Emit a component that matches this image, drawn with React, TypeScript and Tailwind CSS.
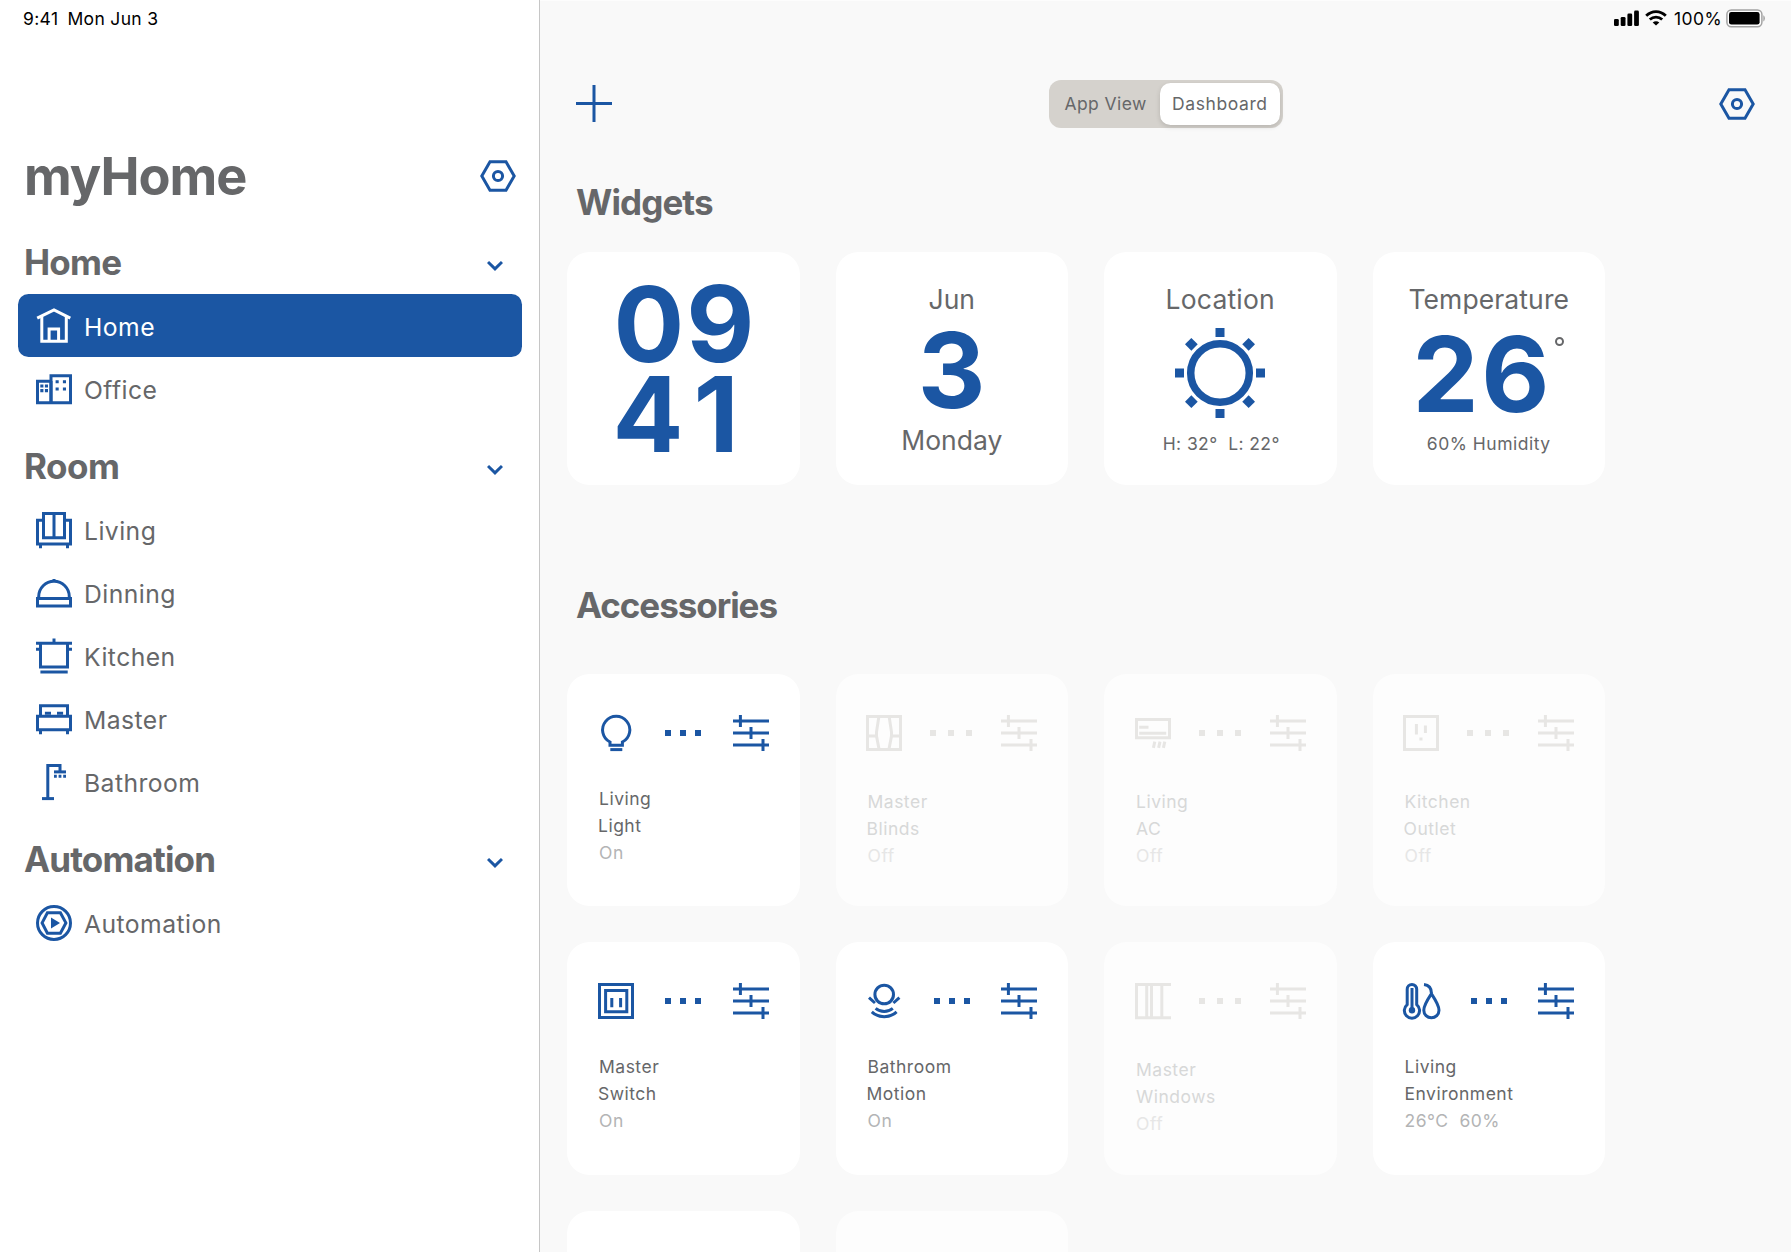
import React, { ReactNode } from "react";

function Glyph({ children, className = "" }: { children: ReactNode; className?: string }) {
  return (
    <svg
      width="36"
      height="36"
      viewBox="0 0 36 36"
      fill="none"
      stroke="currentColor"
      strokeWidth="3"
      className={"shrink-0 overflow-visible " + className}
    >
      {children}
    </svg>
  );
}

/* Navigation icons */
const HomeIcon = () => (
  <Glyph>
    <path d="M1.2 10.2 L18 1.9 L34.3 10.2" />
    <path d="M5.8 8.5 V33.3 H30.3 V8.5" />
    <path d="M13.1 33 V21 H22.6 V33" />
  </Glyph>
);
const OfficeIcon = () => (
  <Glyph>
    <path d="M15 10.3 H1.5 V31.7" />
    <path d="M15 31.7 V4.7 H34.5 V31.7 H0" />
    <path d="M15 31 V10" />
    <path
      stroke="none"
      fill="currentColor"
      d="M4.3 13.5h3.1v3.1H4.3z M8.9 13.5H12v3.1H8.9z M4.3 18.1h3.1v3.1H4.3z M8.9 18.1H12v3.1H8.9z M19.6 9.2h3.1v3.1h-3.1z M26.9 9.2H30v3.1h-3.1z M19.6 16.4h3.1v3.1h-3.1z M26.9 16.4H30v3.1h-3.1z"
    />
  </Glyph>
);
const LivingIcon = () => (
  <Glyph>
    <path d="M7.5 1.5 H28.5 V25.8 H7.5 Z M18 1.5 V25.8" />
    <path d="M7.5 8.2 H1.5 V32 H34.5 V8.2 H28.5" />
    <path d="M4.5 32 V36.2 M31.5 32 V36.2" />
  </Glyph>
);
const DiningIcon = () => (
  <Glyph>
    <path d="M1.5 23.6 H34.5 V31 H1.5 Z" />
    <path d="M2.7 23 V21.6 A15.3 15.3 0 0 1 33.3 21.6 V23" />
    <path d="M18 4 V7" />
  </Glyph>
);
const KitchenIcon = () => (
  <Glyph>
    <path d="M0 5.3 H36" />
    <path d="M18 .5 V5" />
    <path d="M4.5 5 V29 H31.5 V5" />
    <path d="M0 11.3 H4.5 M31.5 11.3 H36" />
    <path d="M4.4 34 H31.7" />
  </Glyph>
);
const BedIcon = () => (
  <Glyph>
    <path d="M4.5 15 V4.7 H31.5 V15" />
    <path d="M1.5 15.3 H34.5 V28.7 H1.5 Z" />
    <path d="M4.5 29 V33.3 M31.5 29 V33.3" />
    <path d="M8.9 12.2 H15 M21 12.2 H27.1" />
  </Glyph>
);
const ShowerIcon = () => (
  <Glyph>
    <path d="M6 34.6 H18" />
    <path d="M11.8 34.6 V1.6 H24 V7.5" />
    <path d="M18 7.9 H30" />
    <path d="M18 12.2 h2.8 M22.6 12.2 h2.8 M27.2 12.2 H30" />
  </Glyph>
);
const AutomationIcon = () => (
  <Glyph>
    <circle cx="18" cy="18" r="16.5" />
    <path d="M11.4 7.7 H24.4 L29.9 17.9 L24.4 28.2 H11.4 L6.1 17.9 Z" />
    <path stroke="none" fill="currentColor" d="M15 12.6 L24 18 L15 23.6 Z" />
  </Glyph>
);
const GearIcon = () => (
  <Glyph className="text-[#1b56a3]">
    <path d="M10 3.7 H26 L34.2 18 L26 32.3 H10 L1.8 18 Z" />
    <circle cx="18" cy="18" r="4.6" />
  </Glyph>
);

/* Accessory icons */
const BulbIcon = () => (
  <Glyph>
    <path d="M12 30.3 V27 A13.6 13.6 0 1 1 24.4 27 V30.3 Z" />
    <path d="M12.3 34.6 H24.3" />
  </Glyph>
);
const BlindsIcon = () => (
  <Glyph>
    <path d="M1.5 1.5 H34.5 V34.5 H1.5 Z" />
    <path d="M12.8 2 L10.5 17 V21 L13 34 M23.2 2 L25.5 17 V21 L23 34" />
    <path d="M2 21 H10.5 M25.5 21 H34" />
  </Glyph>
);
const AcIcon = () => (
  <Glyph>
    <path d="M1.5 4.5 H34.5 V22.7 H1.5 Z" />
    <path d="M4.2 12.3 H13.5 M4.2 18.2 H31.2" />
    <path d="M19.8 26.6 L18.4 32.8 M25 26.6 L23.6 32.8 M29.8 26.6 L28.4 32.8" />
  </Glyph>
);
const OutletIcon = () => (
  <Glyph>
    <path d="M1.5 1.5 H34.5 V34.5 H1.5 Z" />
    <path d="M13.4 9 V19.4 M22.4 10.6 V18" />
    <path d="M16.4 24 H19.5" />
  </Glyph>
);
const SwitchIcon = () => (
  <Glyph>
    <path d="M1.5 1.5 H34.5 V34.5 H1.5 Z" />
    <path d="M7.6 7.6 H28.8 V28.7 H7.6 Z" />
    <path d="M13.8 15 V24.2 M22.6 15 V24.2" />
  </Glyph>
);
const MotionIcon = () => (
  <Glyph>
    <circle cx="18.2" cy="11.5" r="9.3" />
    <path d="M3 14.6 L9 20 M33.4 14.6 L27.4 20" />
    <path d="M9.6 25.4 A13.5 13.5 0 0 0 26.8 25.4" />
    <path d="M5.8 28.9 A18.5 18.5 0 0 0 30.6 28.9" />
  </Glyph>
);
const WindowIcon = () => (
  <Glyph>
    <path d="M36 1.5 H1.5 V34.7 H36" />
    <path d="M11.7 2 V34 M16.5 2 V34 M26.8 2 V34" />
  </Glyph>
);
const ClimateIcon = () => (
  <Glyph>
    <path d="M4.2 21.6 V6.2 A4.75 4.75 0 0 1 13.7 6.2 V21.6 A7.6 7.6 0 1 1 4.2 21.6 Z" />
    <path d="M9 5 V27" />
    <circle cx="9" cy="27.2" r="3.2" fill="currentColor" stroke="none" />
    <path d="M28.4 10.8 C25 16 20.8 22 20.8 27.2 A7.6 7.6 0 0 0 36 27.2 C36 22 31.8 16 28.4 10.8 Z" />
    <path d="M21 1.6 C25.4 2 28.4 5.2 28.5 10.5" />
  </Glyph>
);
const SlidersIcon = () => (
  <Glyph>
    <path d="M0 6 H36 M0 18 H36 M0 30 H36" />
    <path d="M7.4 0 V12 M18 12 V24 M30 24 V36" />
  </Glyph>
);

function Chevron() {
  return (
    <svg width="16" height="11" viewBox="0 0 16 11" fill="none" stroke="#1b56a3" strokeWidth="3">
      <path d="M1 2 L8 8.9 L15 2" />
    </svg>
  );
}

function Section({ title, tracking, children }: { title: string; tracking: string; children: ReactNode }) {
  return (
    <section>
      <div className="flex h-[78px] items-center justify-between pl-6 pr-9 pt-[14px]">
        <h2 className={"text-[35px] font-bold leading-[44px] " + tracking}>{title}</h2>
        <div className="pt-[7px]">
          <Chevron />
        </div>
      </div>
      <nav className="flex flex-col pl-[18px] pr-[17px]">{children}</nav>
    </section>
  );
}

function NavItem({ icon, label, active }: { icon: ReactNode; label: string; active?: boolean }) {
  return (
    <a
      className={
        "flex h-[63px] items-center rounded-[10.5px] pl-[18px] " + (active ? "bg-[#1b56a3] text-white" : "text-[#1b56a3]")
      }
    >
      {icon}
      <span
        className={
          "pl-3 pt-[3px] text-[24.7px] leading-[30px] tracking-[0.45px] " + (active ? "text-white" : "text-[#666769]")
        }
      >
        {label}
      </span>
    </a>
  );
}

function StatusIcons() {
  return (
    <div className="flex h-[37px] items-center">
      <svg width="26" height="16" viewBox="0 0 26 16" className="mb-0.5">
        <rect x="0" y="9" width="4.8" height="7" rx="1.3" />
        <rect x="6.7" y="6.9" width="4.8" height="9.1" rx="1.3" />
        <rect x="13.4" y="3.6" width="4.8" height="12.4" rx="1.3" />
        <rect x="20.1" y="0.6" width="4.8" height="15.4" rx="1.3" />
      </svg>
      <svg width="22" height="16" viewBox="0 0 22 16" className="mb-0.5 ml-[5.5px]" fill="none" stroke="#000" strokeWidth="2.8">
        <path d="M1.2 5.8 C6.8 .2 15.2 .2 20.8 5.8" />
        <path d="M4.8 9.6 C8.4 6.2 13.6 6.2 17.2 9.6" />
        <path d="M11 15.6 L7.7 12.4 C9.6 10.8 12.4 10.8 14.3 12.4 Z" fill="#000" stroke="none" />
      </svg>
      <span className="ml-[7px] w-[52px] text-[17.5px] leading-[37px] tracking-[0.4px] text-black">100%</span>
      <svg width="39" height="19" viewBox="0 0 39 19">
        <rect x="0.9" y="0.9" width="35" height="16.8" rx="4.4" fill="#fdfdfd" stroke="#a3a3a3" strokeWidth="1.5" />
        <rect x="3" y="3" width="30.6" height="12.6" rx="2.4" />
        <path d="M37.3 6.2 C39.4 7 39.4 11.6 37.3 12.4 Z" fill="#a3a3a3" />
      </svg>
    </div>
  );
}

function Card({ children, dim, className = "" }: { children?: ReactNode; dim?: boolean; className?: string }) {
  return (
    <div className={"h-[232.5px] w-[232.5px] rounded-[22.5px] " + (dim ? "bg-[#fdfdfd] " : "bg-white ") + className}>
      {children}
    </div>
  );
}

function Accessory({
  icon,
  room,
  name,
  state,
  dim,
  shift,
}: {
  icon: ReactNode;
  room: string;
  name: string;
  state: string;
  dim?: boolean;
  shift?: boolean;
}) {
  return (
    <Card dim={dim} className="pl-[30.5px] pt-[41px]">
      <div className={"flex h-9 w-[171px] items-center justify-between " + (dim ? "text-[#e7e6e4]" : "text-[#1b56a3]")}>
        {icon}
        <div className={"flex " + (dim ? "gap-3 pr-px" : "gap-[9px]")}>
          <i className="size-1.5 bg-current" />
          <i className="size-1.5 bg-current" />
          <i className="size-1.5 bg-current" />
        </div>
        <SlidersIcon />
      </div>
      <div
        className={
          "pl-[1.5px] text-[17.5px] leading-[27px] tracking-[0.5px] " +
          (dim ? "pt-[37px] text-[#d7d8d8]" : "pt-[34px] text-[#666769]")
        }
      >
        <p>{room}</p>
        <p className={shift ? "-ml-px" : ""}>{name}</p>
        <p className={"whitespace-pre " + (dim ? "text-[#e6e6e6]" : "text-[#b3b4b5]")}>{state}</p>
      </div>
    </Card>
  );
}

const rays = [0, 45, 90, 135, 180, 225, 270, 315];

export default function App() {
  return (
    <div className="flex h-[1252px] w-[1791px] overflow-hidden bg-[#f9f9f9] font-['Inter',sans-serif] text-[#666769]">
      <aside className="flex w-[540px] shrink-0 flex-col border-r-[1.5px] border-[#c6c6c6] bg-white">
        <div className="flex h-[37px] gap-[9px] pl-[23px] text-[17.5px] leading-[37px] tracking-[0.35px] text-black">
          <span>9:41</span>
          <span>Mon Jun 3</span>
        </div>
        <div className="mt-[99px] flex h-20 items-center justify-between pl-6 pr-[23px]">
          <h1 className="text-[52.3px] font-bold leading-[80px] tracking-[-1px]">myHome</h1>
          <GearIcon />
        </div>
        <Section title="Home" tracking="tracking-[-0.8px]">
          <NavItem icon={<HomeIcon />} label="Home" active />
          <NavItem icon={<OfficeIcon />} label="Office" />
        </Section>
        <Section title="Room" tracking="tracking-[-0.5px]">
          <NavItem icon={<LivingIcon />} label="Living" />
          <NavItem icon={<DiningIcon />} label="Dinning" />
          <NavItem icon={<KitchenIcon />} label="Kitchen" />
          <NavItem icon={<BedIcon />} label="Master" />
          <NavItem icon={<ShowerIcon />} label="Bathroom" />
        </Section>
        <Section title="Automation" tracking="tracking-[-0.85px]">
          <NavItem icon={<AutomationIcon />} label="Automation" />
        </Section>
      </aside>

      <main className="flex min-w-0 flex-1 flex-col border-t border-[#fdfdfd]">
        <div className="-mt-px flex justify-end pr-[26px]">
          <StatusIcons />
        </div>
        <div className="mt-[42.5px] grid h-12 shrink-0 grid-cols-3 items-center pl-9 pr-[36px]">
          <svg width="36" height="37" viewBox="0 0 36 37" stroke="#1b56a3" strokeWidth="3">
            <path d="M0 18.5 H36 M18 0 V37" />
          </svg>
          <div className="flex h-12 w-[234px] items-center justify-self-center rounded-xl bg-[#d5d2cd] p-[3px] text-[17.5px] leading-[42px]">
            <span className="w-[108px] pl-[13px] tracking-[0.4px]">App View</span>
            <span className="h-[42px] w-[120px] rounded-[10.5px] bg-white pl-[12.5px] tracking-[0.6px] shadow-[0_2px_5px_rgba(0,0,0,0.14)]">
              Dashboard
            </span>
          </div>
          <div className="justify-self-end">
            <GearIcon />
          </div>
        </div>

        <h2 className="mt-[52.5px] shrink-0 pl-9 text-[35px] font-bold leading-[44px] tracking-[-0.9px]">Widgets</h2>
        <div className="mt-7 flex shrink-0 gap-9 pl-[27px]">
          <Card className="pl-[46.5px] pt-[27px] text-[105px] font-bold leading-[90px] text-[#1b56a3]">
            <p className="tracking-[1.9px]">09</p>
            <p className="-ml-px tracking-[14px]">41</p>
          </Card>
          <Card className="flex flex-col items-center pt-8">
            <p className="text-[26.5px] leading-[30px]">Jun</p>
            <p className="text-[105px] font-bold leading-[111px] text-[#1b56a3]">3</p>
            <p className="text-[26.5px] leading-[30px]">Monday</p>
          </Card>
          <Card className="flex flex-col items-center pt-8">
            <p className="text-[26.5px] leading-[30px] tracking-[0.2px]">Location</p>
            <svg width="90" height="90" viewBox="-45 -45 90 90" className="mt-3.5" fill="#1b56a3">
              <circle r="29.3" fill="none" stroke="#1b56a3" strokeWidth="7.5" />
              {rays.map((a) => (
                <rect key={a} x="-4.5" y="-45" width="9" height="9" transform={`rotate(${a})`} />
              ))}
            </svg>
            <p className="mt-[11px] whitespace-pre pl-0.5 text-[17.5px] leading-[30px] tracking-[0.4px]">
              {"H: 32°  L: 22°"}
            </p>
          </Card>
          <Card className="flex flex-col items-center pt-8">
            <p className="text-[26.5px] leading-[30px] tracking-[0.1px]">Temperature</p>
            <div className="relative mt-[5px] -ml-[13px] text-[105px] font-bold leading-[110px] tracking-[2.5px] text-[#1b56a3]">
              26
              <span className="absolute -right-3 top-[18px] size-[9px] rounded-full border-2 border-[#666769]" />
            </div>
            <p className="text-[17.5px] leading-[30px] tracking-[0.5px]">60% Humidity</p>
          </Card>
        </div>

        <h2 className="mt-[99px] shrink-0 pl-9 text-[35px] font-bold leading-[43px] tracking-[-1.05px]">Accessories</h2>
        <div className="mt-[47px] grid shrink-0 grid-cols-[repeat(4,232.5px)] gap-9 pl-[27px]">
          <Accessory icon={<BulbIcon />} room="Living" name="Light" state="On" shift />
          <Accessory icon={<BlindsIcon />} room="Master" name="Blinds" state="Off" dim shift />
          <Accessory icon={<AcIcon />} room="Living" name="AC" state="Off" dim />
          <Accessory icon={<OutletIcon />} room="Kitchen" name="Outlet" state="Off" dim shift />
          <Accessory icon={<SwitchIcon />} room="Master" name="Switch" state="On" shift />
          <Accessory icon={<MotionIcon />} room="Bathroom" name="Motion" state="On" shift />
          <Accessory icon={<WindowIcon />} room="Master" name="Windows" state="Off" dim />
          <Accessory icon={<ClimateIcon />} room="Living" name="Environment" state="26°C  60%" />
          <Card />
          <Card dim />
        </div>
      </main>
    </div>
  );
}
